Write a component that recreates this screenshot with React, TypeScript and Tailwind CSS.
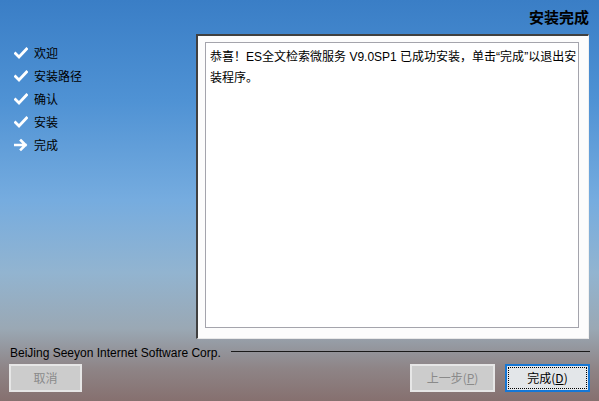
import React from 'react';

const STEPS = [
  { label: '欢迎', done: true },
  { label: '安装路径', done: true },
  { label: '确认', done: true },
  { label: '安装', done: true },
  { label: '完成', done: false },
];

const LATIN = { fontFamily: '"Liberation Sans", sans-serif' };

function Check() {
  return (
    <svg width="14" height="14" viewBox="0 0 14 14">
      <path d="M1.5 7.5 L5 11 L12.5 3" fill="none" stroke="#ffffff" strokeWidth="2.8" strokeLinecap="square" />
    </svg>
  );
}

function Arrow() {
  return (
    <svg width="14" height="14" viewBox="0 0 14 14">
      <path d="M1 7 H11.5 M7 2.5 L11.5 7 L7 11.5" fill="none" stroke="#ffffff" strokeWidth="2.6" strokeLinecap="square" />
    </svg>
  );
}

export default function App() {
  return (
    <div
      className="w-[599px] h-[401px] flex flex-col overflow-hidden text-[12px] text-black bg-[linear-gradient(180deg,#3a7ec6_0%,#4f92d4_25%,#76acdf_50%,#92b4d0_68%,#9aa8b4_82%,#8e8486_92%,#86706f_100%)]"
      style={{ fontFamily: '"Noto Sans CJK SC", "Liberation Sans", sans-serif' }}
    >
      {/* Header */}
      <div className="h-[34px] flex items-center justify-end pr-[10px]">
        <span className="text-[15px] font-bold">安装完成</span>
      </div>

      {/* Body */}
      <div className="flex h-[305px]">
        <ul className="w-[196px] pt-[7px] pl-[14px]">
          {STEPS.map(s => (
            <li key={s.label} className="h-[23px] flex items-center gap-[6px]">
              {s.done ? <Check /> : <Arrow />}
              <span className="leading-none">{s.label}</span>
            </li>
          ))}
        </ul>

        <div className="w-[393px] bg-[#fcfcfc] border-l-2 border-t-2 border-l-[#404040] border-t-[#404040] border-r border-b border-r-[#f0f0f0] border-b-[#e8e8e8] pl-[7px] pr-[9px] pt-[6px] pb-[10px]">
          <div className="h-full bg-white border border-[#a4a4ac] pl-[4px] pr-[1px] pt-[3px] leading-[20px]">
            恭喜！<span style={LATIN}>ES</span>全文检索微服务<span style={LATIN}> V9.0SP1 </span>已成功安装，单击<span style={LATIN}>“</span>完成<span style={LATIN}>”</span>以退出安装程序。
          </div>
        </div>
      </div>

      {/* Footer */}
      <div className="flex items-center h-[18px] mt-[5px] pl-[10px] pr-[9px] gap-[10px]">
        <span className="whitespace-nowrap" style={LATIN}>
          BeiJing Seeyon Internet Software Corp.
        </span>
        <div className="flex-1 h-px bg-[#1a1a1a] -mt-[3px]" />
      </div>

      <div className="flex mt-[2px] px-[9px] h-[28px]">
        <button className="w-[73px] h-full bg-[#cccccc] border-2 border-[#e6e6e6] text-[#8a8a8a]">取消</button>
        <div className="flex-1" />
        <button className="w-[85px] h-full bg-[#cccccc] border-2 border-[#e6e6e6] text-[#8a8a8a]">
          上一步(<span className="underline">P</span>)
        </button>
        <button className="w-[85px] h-full ml-[10px] bg-[#e3e6e9] border-2 border-[#1577d6] p-px">
          <span className="flex items-center justify-center w-full h-full border border-dotted border-black">
            完成(<span className="underline">D</span>)
          </span>
        </button>
      </div>
    </div>
  );
}
